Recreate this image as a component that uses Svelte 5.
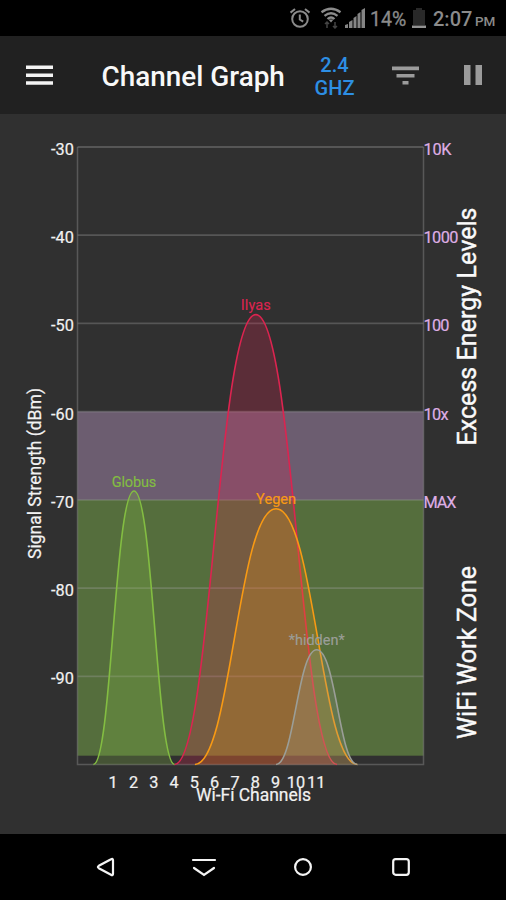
<script lang="ts">
  type Network = {
    name: string;
    center: number;
    reach: number;
    level: number;
    color: string;
    labelWidth: number;
    opacity: number;
  };

  const networks: Network[] = [
    { name: 'Globus', center: 2, reach: 2, level: -69, color: '#83bd42', labelWidth: 44.5, opacity: 0.25 },
    { name: 'Ilyas', center: 8, reach: 4, level: -49, color: '#dc2450', labelWidth: 30, opacity: 0.25 },
    { name: 'Yegen', center: 9, reach: 4, level: -71, color: '#f89a14', labelWidth: 40, opacity: 0.22 },
    { name: '*hidden*', center: 11, reach: 2, level: -87, color: '#9b9e98', labelWidth: 56, opacity: 0.22 },
  ];

  const left = 77.5;
  const right = 423.5;
  const top = 33;
  const bottom = 650.5;

  const levels = [-30, -40, -50, -60, -70, -80, -90];
  const energy = ['10K', '1000', '100', '10x', 'MAX'];
  const energyWidths = [28, 35, 26, 25, 33];
  const channels = [1, 2, 3, 4, 5, 6, 7, 8, 9, 10, 11];

  const x = (channel: number) => 93.4 + channel * 20.3;
  const y = (level: number) => top + ((-30 - level) / 70) * (bottom - top);

  function curve(n: Network) {
    const c = x(n.center);
    const w = n.reach * 20.3;
    const t = y(n.level);
    return `M${c - w} ${bottom} C${c - w * 0.555} ${bottom} ${c - w * 0.47} ${t} ${c} ${t} ` +
      `S${c + w * 0.555} ${bottom} ${c + w} ${bottom}`;
  }
</script>

<div class="phone">
  <div class="status">
    <svg class="alarm" width="22" height="22" viewBox="0 0 22 22">
      <circle cx="11" cy="12" r="7.8" />
      <path d="M10.8 7.5v5l3.4 2.2M1.500 5.600l4.500-3.600M20.500 5.600l-4.500-3.600" />
    </svg>
    <svg class="wifi" width="22" height="24" viewBox="0 0 22 24">
      <path d="M1.500 6.300Q11 -.7 20.500 6.300M4.500 9.800Q11 4.800 17.500 9.800M7.500 13Q11 10 14.500 13" />
      <path class="solid" d="M8.500 13.500h5l-2.500 3z" />
      <path class="dim" d="M7 22v-6m-2 2l2-2 2 2M15 16v6m-2-2l2 2 2-2" />
    </svg>
    <svg class="signal" width="22" height="22" viewBox="0 0 22 22">
      <path d="M1 21v-3l3-1v4zM5 21v-6l3.500-2v8zM9.500 21v-10l3-2v12zM13.500 21v-14l3-2v16zM17.500 21v-18l3.500-2v20z" />
    </svg>
    <span class="percent">14%</span>
    <svg class="battery" width="14" height="22" viewBox="0 0 14 22">
      <path fill="#292929" d="M1 3h3V1h6v2h3v15H1z" />
      <path fill="#929292" d="M0 18.500h14v2.500H0z" />
    </svg>
    <span class="clock">2:07</span>
    <span class="pm">PM</span>
  </div>

  <header>
    <svg class="menu" width="27" height="21" viewBox="0 0 27 21">
      <path fill="#f4f4f4" d="M0 .500h27v3.500H0zM0 8.500h27v3.500H0zM0 16.300h27v3.500H0z" />
    </svg>
    <h1>Channel Graph</h1>
    <div class="band">2.4<br />GHZ</div>
    <svg class="filter" width="27" height="19" viewBox="0 0 27 19">
      <path fill="#9b9b9b" d="M0 .500h27v3.800H0zM4.500 8h18v3.500h-18zM10.500 15h6v3.500h-6z" />
    </svg>
    <svg class="pause" width="18" height="20" viewBox="0 0 18 20">
      <path fill="#9b9b9b" d="M0 0h6.500v20H0zM11.500 0h6.500v20h-6.500z" />
    </svg>
  </header>

  <main>
    <svg width="506" height="720" viewBox="0 0 506 720">
      <rect x={left} y={y(-60)} width={right - left} height={y(-70) - y(-60)} fill="#6c5d70" />
      <rect x={left} y={y(-70)} width={right - left} height={y(-99) - y(-70)} fill="#556e3d" />

      {#each levels as level, i}
        <line class="grid" x1={left} x2={right} y1={y(level)} y2={y(level)} />
        <text class="tick" x="74" y={y(level) + 8} text-anchor="end" textLength="23">{level}</text>
        {#if energy[i]}
          <text class="tick energy" x="423.500" y={y(level) + 8} textLength={energyWidths[i]}>{energy[i]}</text>
        {/if}
      {/each}
      <path class="frame" d="M{left} {top}V{bottom}H{right}V{top}" />

      {#each networks as n}
        <path d={curve(n)} fill={n.color} fill-opacity={n.opacity} stroke={n.color} stroke-width="1.600" />
      {/each}
      {#each networks as n}
        <text class="name" x={x(n.center)} y={y(n.level) - 4.500} fill={n.color} stroke={n.color} text-anchor="middle" textLength={n.labelWidth}>{n.name}</text>
      {/each}

      {#each channels as channel}
        <text class="tick" x={x(channel) - 0.500} y="674" text-anchor="middle">{channel}</text>
      {/each}

      <text class="title" x="253.500" y="687" text-anchor="middle" textLength="115">Wi-Fi Channels</text>
      <text class="title" transform="translate(40.500 359.500) rotate(-90)" text-anchor="middle" textLength="171">Signal Strength (dBm)</text>
      <text class="zone" transform="translate(476 212.500) rotate(-90)" text-anchor="middle" textLength="238">Excess Energy Levels</text>
      <text class="zone" transform="translate(476 538.500) rotate(-90)" text-anchor="middle" textLength="173">WiFi Work Zone</text>
    </svg>
  </main>

  <nav>
    <svg width="20" height="22" viewBox="0 0 20 22">
      <path d="M15 3.200Q17 2 17 4.300v13.400q0 2.300-2 1.100L2.800 12.200q-1.800-1.200 0-2.400z" />
    </svg>
    <svg width="26" height="22" viewBox="0 0 26 22">
      <path d="M2 4h22M3 12l10 7 10-7" />
    </svg>
    <svg width="20" height="22" viewBox="0 0 20 22">
      <circle cx="10" cy="11" r="7.900" />
    </svg>
    <svg width="20" height="22" viewBox="0 0 20 22">
      <rect x="2.200" y="3.200" width="15.600" height="15.600" rx="2.500" />
    </svg>
  </nav>
</div>

<style>
  :global(body) {
    background: #000;
  }

  .phone {
    width: 506px;
    height: 900px;
    display: flex;
    flex-direction: column;
    overflow: hidden;
    font-family: Roboto, 'Liberation Sans', sans-serif;
  }

  .status {
    height: 36px;
    box-sizing: border-box;
    display: flex;
    align-items: center;
    justify-content: flex-end;
    padding: 2px 10px 0 0;
    background: #000;
    color: #8b8b8b;
  }

  .alarm, .wifi {
    fill: none;
    stroke: #8b8b8b;
    stroke-width: 2;
  }

  .alarm {
    margin-right: 9px;
    margin-bottom: 2px;
  }

  .wifi {
    margin-right: 2px;
    margin-bottom: 2px;
    stroke-width: 2.3;
  }

  .wifi .solid {
    fill: #8b8b8b;
    stroke: none;
  }

  .wifi .dim {
    stroke: #444;
    stroke-width: 1.5;
  }

  .signal {
    margin-right: 4px;
    margin-bottom: 2px;
    fill: #858585;
  }

  .percent {
    width: 37px;
    font-size: 19.5px;
    -webkit-text-stroke: 0.3px #8b8b8b;
  }

  .battery {
    margin: 0 7px 2px 5px;
  }

  .clock {
    width: 38px;
    font-size: 20px;
    font-weight: 500;
  }

  .pm {
    width: 21px;
    margin-left: 4px;
    padding-top: 4px;
    font-size: 13.5px;
    font-weight: 500;
  }

  header {
    height: 78px;
    display: flex;
    align-items: center;
    background: #212121;
  }

  .menu {
    margin-left: 26px;
  }

  h1 {
    width: 184px;
    margin: 2px 0 0 48.5px;
    font-size: 27.9px;
    font-weight: 500;
    color: #f8f8f8;
    white-space: nowrap;
  }

  .band {
    width: 50px;
    margin-left: 24px;
    margin-top: 3px;
    color: #2d8fe4;
    font-size: 20px;
    line-height: 23px;
    font-weight: 500;
    text-align: center;
  }

  .filter {
    margin-left: 32.5px;
  }

  .pause {
    margin-left: 45px;
  }

  main {
    height: 720px;
    background: #303030;
  }

  main svg {
    display: block;
  }

  .grid {
    stroke: #a0a0a0;
    stroke-opacity: 0.34;
    stroke-width: 1.8;
  }

  .frame {
    fill: none;
    stroke: #808080;
    stroke-opacity: 0.5;
    stroke-width: 1.5;
  }

  .tick {
    font-size: 16.3px;
    fill: #f2f2f2;
    stroke: #f2f2f2;
    stroke-width: 0.2;
  }

  .energy {
    fill: #dfaee5;
    stroke: #dfaee5;
  }

  .name {
    font-size: 14.5px;
    stroke-width: 0.15;
  }

  .title {
    font-size: 17.5px;
    fill: #f2f2f2;
    stroke: #f2f2f2;
    stroke-width: 0.2;
  }

  .zone {
    font-size: 25px;
    fill: #fafafa;
    stroke: #fafafa;
    stroke-width: 0.4;
  }

  nav {
    height: 66px;
    box-sizing: border-box;
    display: grid;
    grid-template-columns: repeat(4, 98.5px);
    justify-content: center;
    justify-items: center;
    align-items: center;
    padding-left: 1px;
    background: #000;
  }

  nav svg {
    fill: none;
    stroke: #f4f4f4;
    stroke-width: 2.2;
    stroke-linecap: round;
  }
</style>
